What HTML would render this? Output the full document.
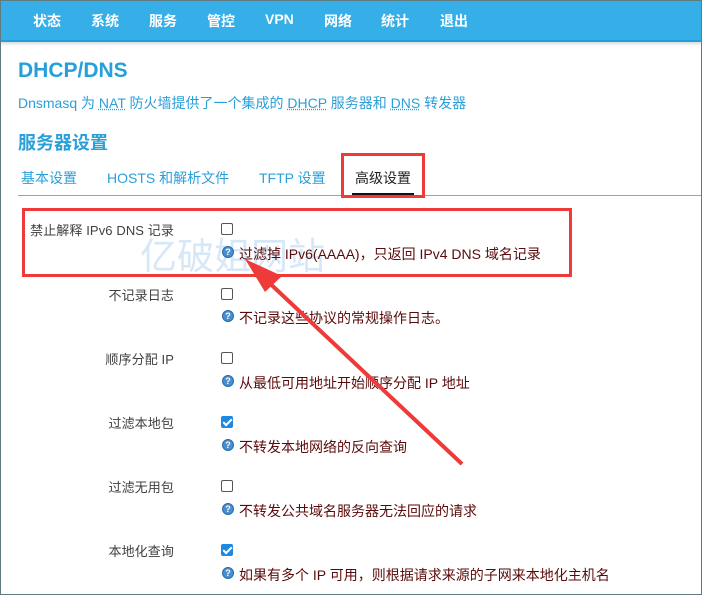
<!DOCTYPE html><html><head><meta charset="utf-8"><style>
*{margin:0;padding:0;box-sizing:border-box}
body{width:702px;height:595px;overflow:hidden;background:#fff;font-family:"Liberation Sans","Noto Sans CJK SC",sans-serif;position:relative}
.frame{position:absolute;inset:0;border:1px solid #5f7a80;pointer-events:none;z-index:9}
.nav{position:absolute;left:0;top:0;width:702px;height:42px;background:#36aee8;border-bottom:2px solid #1f9fdc;box-shadow:0 2px 3px rgba(0,0,0,.15)}
.nav span{position:absolute;top:11px;color:#fff;font-size:14px;font-weight:bold}
.a{position:absolute;white-space:nowrap}
h1{position:absolute;left:18px;top:59px;font-size:21px;color:#25a0db;font-weight:bold}
.desc{left:18px;top:93px;font-size:14px;color:#2a9fd8}
.desc u{text-decoration:underline dotted}
h2{position:absolute;left:18px;top:129px;font-size:18px;color:#2a9fd8;font-weight:bold}
.tab{top:168px;font-size:14px;color:#2a9fd8}
.line{position:absolute;left:18px;top:195px;width:684px;height:1px;background:#5ab8e4}
.lbl{font-size:13px;color:#404040;text-align:right;right:528px;letter-spacing:.1px}
.cb{position:absolute;left:221px;width:12px;height:12px;border:1px solid #555;border-radius:2px;background:#fff}
.cb.on{background:#1e88e5;border-color:#1e88e5}
.cb.on:after{content:"";position:absolute;left:3px;top:0px;width:3px;height:7px;border:solid #fff;border-width:0 2px 2px 0;transform:rotate(45deg)}
.help{position:absolute;left:222px;width:12px;height:12px;border-radius:50%;background:#4a8fd0;border:1px solid #2a6aa8;color:#fff;font-size:9px;font-weight:bold;text-align:center;line-height:10px}
.ht{left:239px;font-size:14px;color:#5a0a0a}
.red{position:absolute;border:3px solid #ef3a3a}
</style></head><body>
<div class="nav"><span style="left:33px">状态</span><span style="left:91px">系统</span><span style="left:149px">服务</span><span style="left:207px">管控</span><span style="left:265px">VPN</span><span style="left:324px">网络</span><span style="left:381px">统计</span><span style="left:440px">退出</span></div>
<h1>DHCP/DNS</h1>
<div class="a desc">Dnsmasq 为 <u>NAT</u> 防火墙提供了一个集成的 <u>DHCP</u> 服务器和 <u>DNS</u> 转发器</div>
<h2>服务器设置</h2>
<div class="a tab" style="left:21px">基本设置</div>
<div class="a tab" style="left:107px">HOSTS 和解析文件</div>
<div class="a tab" style="left:259px">TFTP 设置</div>
<div class="a tab" style="left:355px;color:#222">高级设置</div>
<div class="line"></div>
<div style="position:absolute;left:352px;top:193px;width:62px;height:2px;background:#111"></div>
<div class="red" style="left:341px;top:153px;width:84px;height:45px"></div>

<div class="a" style="left:140px;top:226px;font-size:37px;color:rgba(120,180,230,.3)">亿破姐网站</div>

<div class="a lbl" style="top:220px">禁止解释 IPv6 DNS 记录</div><div class="cb" style="top:223px"></div>
<div class="help" style="top:246px">?</div><div class="a ht" style="top:244px">过滤掉 IPv6(AAAA)，只返回 IPv4 DNS 域名记录</div>
<div class="a lbl" style="top:285px">不记录日志</div><div class="cb" style="top:288px"></div>
<div class="help" style="top:310px">?</div><div class="a ht" style="top:308px">不记录这些协议的常规操作日志。</div>
<div class="a lbl" style="top:349px">顺序分配 IP</div><div class="cb" style="top:352px"></div>
<div class="help" style="top:375px">?</div><div class="a ht" style="top:373px">从最低可用地址开始顺序分配 IP 地址</div>
<div class="a lbl" style="top:413px">过滤本地包</div><div class="cb on" style="top:416px"></div>
<div class="help" style="top:439px">?</div><div class="a ht" style="top:437px">不转发本地网络的反向查询</div>
<div class="a lbl" style="top:477px">过滤无用包</div><div class="cb" style="top:480px"></div>
<div class="help" style="top:503px">?</div><div class="a ht" style="top:501px">不转发公共域名服务器无法回应的请求</div>
<div class="a lbl" style="top:541px">本地化查询</div><div class="cb on" style="top:544px"></div>
<div class="help" style="top:567px">?</div><div class="a ht" style="top:565px">如果有多个 IP 可用，则根据请求来源的子网来本地化主机名</div>

<div class="red" style="left:22px;top:208px;width:550px;height:69px"></div>
<svg style="position:absolute;left:0;top:0" width="702" height="595"><line x1="462" y1="464" x2="262" y2="276" stroke="#ef3a3a" stroke-width="4"/><polygon points="245,259 282,276 265,292" fill="#ef3a3a"/></svg>
<div class="frame"></div>
</body></html>
